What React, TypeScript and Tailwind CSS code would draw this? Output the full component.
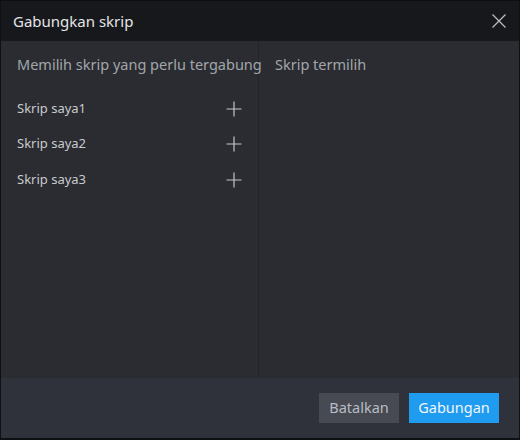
const scripts = ['Skrip saya1', 'Skrip saya2', 'Skrip saya3'];

function CloseIcon() {
  return (
    <svg width="16" height="16" viewBox="0 0 16 16" className="text-[#b9bbbf]">
      <path d="M1.5 1.5L14.5 14.5M14.5 1.5L1.5 14.5" stroke="currentColor" strokeWidth="1.3" fill="none" />
    </svg>
  );
}

function PlusIcon() {
  return (
    <svg width="16" height="16" viewBox="0 0 16 16" className="text-[#c4c5c8]">
      <path d="M8 0.5V15.5M0.5 8H15.5" stroke="currentColor" strokeWidth="1.2" fill="none" />
    </svg>
  );
}

export default function App() {
  return (
    <div
      className="w-[520px] h-[440px] flex flex-col bg-[#0f1013] border-l border-r border-b-2 border-[#0f1013] overflow-hidden"
      style={{ fontFamily: '"Noto Sans", "Open Sans", sans-serif' }}
    >
      {/* title bar */}
      <div className="h-[41px] shrink-0 flex items-center justify-between pl-3 pr-[12px] bg-[#17181c] border-t border-[#0c0d0f]">
        <span className="text-[15px] text-[#e4e5e7]">Gabungkan skrip</span>
        <CloseIcon />
      </div>

      {/* body */}
      <div className="flex-1 flex bg-[#2a2c31]">
        <div className="w-[258px] border-r border-[#222428] flex flex-col">
          <div className="pl-[16px] pt-[13px] text-[14.5px] text-[#a3a6ab] whitespace-nowrap">
            Memilih skrip yang perlu tergabung
          </div>
          <div className="mt-[15px] flex flex-col">
            {scripts.map((s) => (
              <div key={s} className="h-[35.5px] flex items-center justify-between pl-[16px] pr-[16px]">
                <span className="text-[13px] text-[#c9cacd]">{s}</span>
                <PlusIcon />
              </div>
            ))}
          </div>
        </div>
        <div className="flex-1 pl-[16px] pt-[13px] text-[14.5px] text-[#a3a6ab]">Skrip termilih</div>
      </div>

      {/* footer */}
      <div className="h-[60px] shrink-0 flex items-center justify-end gap-[10px] pr-[20px] bg-[#30323b]">
        <button className="h-[30px] w-[80px] bg-[#474a53] text-[14.5px] text-[#b9bcc3]">Batalkan</button>
        <button className="h-[30px] w-[90px] bg-[#1f9bf0] text-[14.5px] text-[#eef6ff]">Gabungan</button>
      </div>
    </div>
  );
}
